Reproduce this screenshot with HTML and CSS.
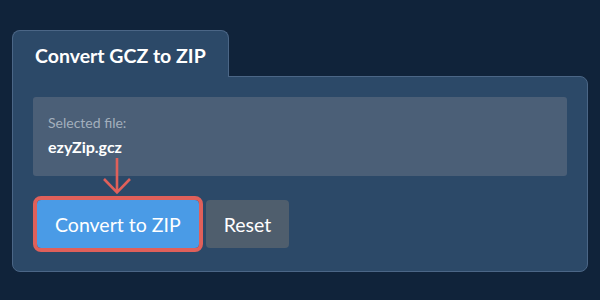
FILE: index.html
```html
<!DOCTYPE html>
<html lang="en">
<head>
  <meta charset="UTF-8">
  <meta name="viewport" content="width=device-width, initial-scale=1.0">
  <title>Convert GCZ to ZIP</title>
  <link rel="stylesheet" href="styles.css">
</head>
<body>
  <div class="converter">
    <div class="tab">
      <h2>Convert GCZ to ZIP</h2>
    </div>
    <div class="panel">
      <div class="file-box">
        <span class="file-label">Selected file:</span>
        <span class="file-name">ezyZip.gcz</span>
      </div>

      <div class="actions">
        <!-- pointer arrow over the convert button -->
        <svg class="pointer" width="30" height="38" viewBox="0 0 30 38">
          <path d="M15 0 V35 M2 21 L15 34.5 L28 21" fill="none" stroke="#e0605a" stroke-width="2.6"/>
        </svg>
        <button class="convert-btn">Convert to ZIP</button>
        <button class="reset-btn">Reset</button>
      </div>
    </div>
  </div>
</body>
</html>
```

FILE: styles.css
```css
/* Base styles */
body {
  font-family: Lato, "Open Sans", sans-serif;
  margin: 0;
  background-color: #10233a;
  color: #fff;
}

.converter {
  padding: 30px 12px 0 12px;
}

/* Tab header */
.tab {
  display: inline-block;
  position: relative;
  z-index: 1;
  margin-bottom: -1px;
  padding: 0 22px;
  height: 46px;
  background-color: #2c4968;
  border: 1px solid #4b6686;
  border-bottom: none;
  border-radius: 8px 8px 0 0;
}

.tab h2 {
  margin: 0;
  font-size: 19.5px;
  font-weight: bold;
  line-height: 50px;
}

/* Main panel */
.panel {
  background-color: #2c4968;
  border: 1px solid #4b6686;
  border-radius: 0 8px 8px 8px;
  padding: 20px 20px 23px 20px;
}

.file-box {
  display: flex;
  flex-direction: column;
  background-color: #4b5f77;
  border-radius: 3px;
  height: 79px;
  box-sizing: border-box;
  padding: 16px 15px 0 15px;
}

.file-label {
  font-size: 14px;
  color: #a3afbd;
  line-height: 20px;
}

.file-name {
  font-size: 16px;
  font-weight: bold;
  line-height: 24px;
  margin-top: 2px;
}

.actions {
  position: relative;
  display: flex;
  gap: 7px;
  margin-top: 24px;
}

.pointer {
  position: absolute;
  left: 69px;
  top: -42px;
}

.actions button {
  font-family: inherit;
  font-size: 19.5px;
  color: #fff;
  height: 48px;
  padding: 0 18px;
  border: none;
  border-radius: 4px;
  cursor: pointer;
}

.convert-btn {
  margin-left: 4px;
  background-color: #4a9be6;
  outline: 4px solid #e0605a;
  border-radius: 2px;
}

.reset-btn {
  background-color: #4f5e6d;
}
```
